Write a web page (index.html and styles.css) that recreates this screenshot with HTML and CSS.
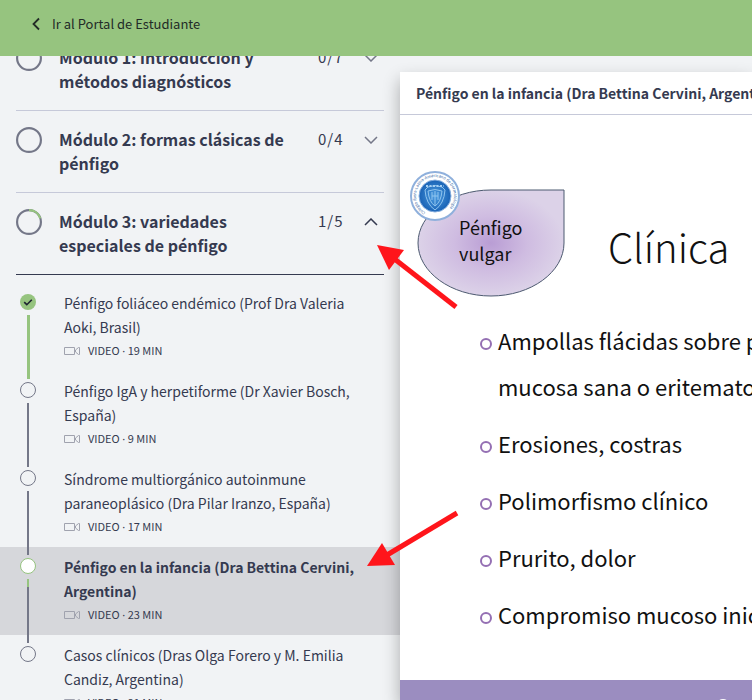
FILE: index.html
```html
<!DOCTYPE html>
<html lang="es">

<head>
  <meta charset="UTF-8">
  <meta name="viewport" content="width=device-width, initial-scale=1.0">
  <title>Pénfigo en la infancia</title>
  <link rel="stylesheet" href="styles.css">
</head>

<body>
  <svg class="defs" aria-hidden="true">
    <symbol id="chevron" viewBox="0 0 14 8"><path d="M1 1l6 6 6-6" fill="none" stroke="currentColor" stroke-width="1.5"/></symbol>
    <symbol id="video" viewBox="0 0 16 10"><path d="M.5 1.500h10v7H.5zM15.500 1.500v7h-1l-3-2.500V4l3-2.500z" fill="none" stroke="currentColor"/></symbol>
  </svg>

  <header class="topbar">
    <a href="#" class="back">
      <svg class="back-icon" viewBox="0 0 8 14"><path d="M7 1.500L1.500 7 7 12.500" fill="none" stroke="currentColor" stroke-width="1.800"/></svg>
      <span>Ir al Portal de Estudiante</span>
    </a>
  </header>

  <div class="layout">
    <nav class="sidebar">
      <div class="modules">
        <button class="module">
          <svg class="ring" viewBox="0 0 24 24"><circle cx="12" cy="12" r="11"/></svg>
          <span class="name">Módulo 1: introducción y métodos diagnósticos</span>
          <span class="total">0/7</span>
          <svg class="chevron"><use href="#chevron"/></svg>
        </button>
        <button class="module">
          <svg class="ring" viewBox="0 0 24 24"><circle cx="12" cy="12" r="11"/></svg>
          <span class="name">Módulo 2: formas clásicas de pénfigo</span>
          <span class="total">0/4</span>
          <svg class="chevron"><use href="#chevron"/></svg>
        </button>
        <button class="module open" aria-expanded="true">
          <svg class="ring" viewBox="0 0 24 24"><circle cx="12" cy="12" r="11"/><path class="part" d="M12 1A11 11 0 0 1 22.500 8.600"/></svg>
          <span class="name">Módulo 3: variedades especiales de pénfigo</span>
          <span class="total">1/5</span>
          <svg class="chevron"><use href="#chevron"/></svg>
        </button>
      </div>

      <div class="lessons">
        <a href="#" class="lesson done">
          <span class="track"><span class="dot"><svg class="check" viewBox="0 0 16 16"><path d="M4.200 8.200l2.600 2.500 5-5" fill="none" stroke="#1d2430" stroke-width="1.600"/></svg></span><span class="line"></span></span>
          <span class="text">
            <span class="title">Pénfigo foliáceo endémico (Prof Dra Valeria Aoki, Brasil)</span>
            <span class="meta"><svg class="video"><use href="#video"/></svg><span>VIDEO <i>·</i> 19 MIN</span></span>
          </span>
        </a>
        <a href="#" class="lesson">
          <span class="track"><span class="dot"></span><span class="line"></span></span>
          <span class="text">
            <span class="title">Pénfigo IgA y herpetiforme (Dr Xavier Bosch, España)</span>
            <span class="meta"><svg class="video"><use href="#video"/></svg><span>VIDEO <i>·</i> 9 MIN</span></span>
          </span>
        </a>
        <a href="#" class="lesson">
          <span class="track"><span class="dot"></span><span class="line"></span></span>
          <span class="text">
            <span class="title">Síndrome multiorgánico autoinmune paraneoplásico (Dra Pilar Iranzo, España)</span>
            <span class="meta"><svg class="video"><use href="#video"/></svg><span>VIDEO <i>·</i> 17 MIN</span></span>
          </span>
        </a>
        <a href="#" class="lesson current">
          <span class="track"><span class="dot"></span><span class="line"></span></span>
          <span class="text">
            <span class="title">Pénfigo en la infancia (Dra Bettina Cervini, Argentina)</span>
            <span class="meta"><svg class="video"><use href="#video"/></svg><span>VIDEO <i>·</i> 23 MIN</span></span>
          </span>
        </a>
        <a href="#" class="lesson">
          <span class="track"><span class="dot"></span></span>
          <span class="text">
            <span class="title">Casos clínicos (Dras Olga Forero y M. Emilia Candiz, Argentina)</span>
            <span class="meta"><svg class="video"><use href="#video"/></svg><span>VIDEO <i>·</i> 21 MIN</span></span>
          </span>
        </a>
      </div>
    </nav>

    <main class="content">
      <h1>Pénfigo en la infancia (Dra Bettina Cervini, Argentina)</h1>
      <section class="slide">
        <div class="slide-head">
          <div class="drop">
            <svg class="shape" viewBox="0 0 160 130">
              <defs>
                <radialGradient id="lilac"><stop offset="0" stop-color="#b99dd4"/><stop offset=".5" stop-color="#cfbce1"/><stop offset="1" stop-color="#dcd2e8"/></radialGradient>
                <radialGradient id="blue"><stop offset="0" stop-color="#4c9ce0"/><stop offset="1" stop-color="#1962b5"/></radialGradient>
                <path id="arc" d="M17.500 42.500A19 19 0 1 1 36.500 42.500"/>
              </defs>
              <path d="M156 20V73C156 102 123 126 83 126S10 102 10 73 43 20 83 20z" fill="url(#lilac)" stroke="#4d5a70"/>
              <circle cx="27" cy="26" r="24" fill="#fff" stroke="#8fb0dc" stroke-width="2"/>
              <circle cx="27" cy="26" r="16" fill="url(#blue)" stroke="#86aede"/>
              <path d="M20 17q7-3 14 0l3 3q-1 14-10 20-9-6-10-20zM20 21q7-3 14 0-1 11-7 15-6-4-7-15zM24 22v8M27 21v14M30 22v8M24 26h6" fill="none" stroke="#8fc4ef"/>
              <path d="M18 16h18" stroke="#a5cef1" stroke-width="2" stroke-dasharray="2 1.500"/>
              <text class="seal"><textPath href="#arc">Colegio Ibero-Latino-Americano de Dermatología</textPath></text>
            </svg>
            <p>Pénfigo<br>vulgar</p>
          </div>
          <h2>Clínica</h2>
        </div>
        <ul>
          <li>Ampollas flácidas sobre piel o<br>mucosa sana o eritematosa</li>
          <li>Erosiones, costras</li>
          <li>Polimorfismo clínico</li>
          <li>Prurito, dolor</li>
          <li>Compromiso mucoso inicial</li>
        </ul>
        <div class="slide-foot"><span class="knob"></span></div>
      </section>
    </main>
  </div>

  <svg class="arrows" viewBox="0 0 96 326" aria-hidden="true">
    <path d="M91 62L27 12" stroke="#ff151b" stroke-width="5"/>
    <path d="M12 0L39 5 24 25z" fill="#ff151b"/>
    <path d="M92 268L22 310" stroke="#ff151b" stroke-width="5"/>
    <path d="M2 321L17 298 30 320z" fill="#ff151b"/>
  </svg>
</body>

</html>
```
FILE: styles.css
```css
html, body {
  height: 100%;
}

body {
  margin: 0;
  overflow: hidden;
  display: flex;
  flex-direction: column;
  font-family: "Noto Sans CJK SC", "Noto Sans", sans-serif;
  background-color: #f1f3f5;
  color: #353a50;
}

a {
  color: inherit;
  text-decoration: none;
}

.defs {
  display: none;
}

.topbar {
  flex: none;
  height: 56px;
  display: flex;
  align-items: center;
  padding: 0 32px;
  background-color: #96c47f;
  color: #222b27;
  z-index: 2;
}

.back {
  display: flex;
  align-items: center;
  gap: 12px;
  font-size: 13px;
  line-height: 16px;
  padding-bottom: 8px;
}

.back-icon {
  width: 8px;
  height: 14px;
}

.layout {
  flex: 1;
  min-height: 0;
  display: flex;
}

.sidebar {
  flex: none;
  width: 400px;
}

/* the list is scrolled a little under the top bar */
.modules {
  margin: -27px 16px 0;
}

.module {
  width: 100%;
  display: flex;
  align-items: flex-start;
  padding: 16px 6px 17px 0;
  border: none;
  border-bottom: 1px solid #c6c9d9;
  background: none;
  color: inherit;
  font-family: inherit;
  line-height: 24px;
  text-align: left;
}

.module.open {
  border-color: #353a50;
}

.ring {
  width: 26px;
  height: 26px;
  fill: none;
  stroke: #747788;
  stroke-width: 2;
}

.part {
  stroke: #96c47f;
}

.name {
  flex: 1;
  margin: 0 16px 0 17px;
  font-size: 16px;
  font-weight: 700;
}

.total {
  width: 46px;
  font-size: 15px;
  letter-spacing: 1px;
}

.chevron {
  width: 14px;
  height: 8px;
  margin-top: 9px;
  color: #747788;
}

.open .chevron {
  transform: rotate(180deg);
  color: #353a50;
}

.lessons {
  padding-top: 8px;
}

.lesson {
  height: 88px;
  box-sizing: border-box;
  display: flex;
  gap: 28px;
  padding: 0 32px 0 20px;
}

.current {
  background-color: #d6d7db;
}

.track {
  flex: none;
  display: flex;
  flex-direction: column;
  align-items: center;
  gap: 5px;
  padding-top: 11px;
  margin-bottom: -8px;
}

.dot {
  width: 16px;
  height: 16px;
  box-sizing: border-box;
  border: 1px solid #747788;
  border-radius: 50%;
}

.done .dot {
  border: none;
  background-color: #96c47f;
}

.current .dot {
  border-color: #96c47f;
  background-color: #fff;
}

.check {
  display: block;
}

.line {
  flex: 1;
  width: 2px;
  background-color: #747788;
  z-index: 1;
}

.done .line {
  width: 3px;
  background-color: #96c47f;
}

.current .line {
  background: linear-gradient(#96c47f 8px, #747788 8px);
}

.text {
  display: flex;
  flex-direction: column;
  padding-top: 8px;
}

.title {
  font-size: 14px;
  line-height: 24px;
}

.current .title {
  font-weight: 700;
}

.meta {
  display: flex;
  align-items: center;
  gap: 8px;
  font-size: 11px;
  line-height: 22px;
}

.meta i {
  font-family: "Noto Sans", sans-serif;
  font-style: normal;
}

.video {
  width: 16px;
  height: 10px;
  color: #a0a2ae;
}

.content {
  flex: 1;
  min-width: 0;
  margin-top: 16px;
  display: flex;
  flex-direction: column;
  background-color: #fff;
  box-shadow: 0 8px 16px rgba(0, 0, 0, 0.3);
  white-space: nowrap;
  overflow: hidden;
}

h1 {
  margin: 0;
  padding: 9px 16px;
  border-bottom: 1px solid #c6c9d9;
  font-size: 14px;
  line-height: 24px;
}

.slide {
  flex: 1;
  display: flex;
  flex-direction: column;
  color: #111;
}

.slide-head {
  display: flex;
  padding: 55px 0 0 8px;
  gap: 40px;
}

.drop {
  display: grid;
}

.shape {
  grid-area: 1 / 1;
  width: 160px;
  height: 130px;
}

.seal {
  font-size: 4px;
  fill: #315f9f;
}

.drop p {
  grid-area: 1 / 1;
  margin: 44px 0 0 51px;
  font-size: 18px;
  line-height: 26px;
}

h2 {
  margin: 48px 0 0;
  font-size: 40px;
  line-height: 56px;
  font-weight: 300;
}

ul {
  margin: 0;
  padding: 17px 0 0 80px;
  list-style: none;
  font-size: 22px;
  line-height: 46px;
}

li {
  display: flex;
  gap: 6px;
  margin-bottom: 11px;
}

li::before {
  content: "";
  flex: none;
  width: 8px;
  height: 8px;
  margin-top: 21px;
  border: 2px solid #946fb3;
  border-radius: 50%;
}

.slide-foot {
  height: 20px;
  margin-top: auto;
  overflow: hidden;
  background-color: #9b8dc0;
}

.knob {
  display: block;
  width: 14px;
  height: 14px;
  margin: 19px 0 0 316px;
  border-radius: 50%;
  background-color: #fff;
}

/* pointers drawn over both panes */
.arrows {
  position: absolute;
  left: 365px;
  top: 245px;
  width: 96px;
  height: 326px;
  z-index: 3;
  pointer-events: none;
}
```
